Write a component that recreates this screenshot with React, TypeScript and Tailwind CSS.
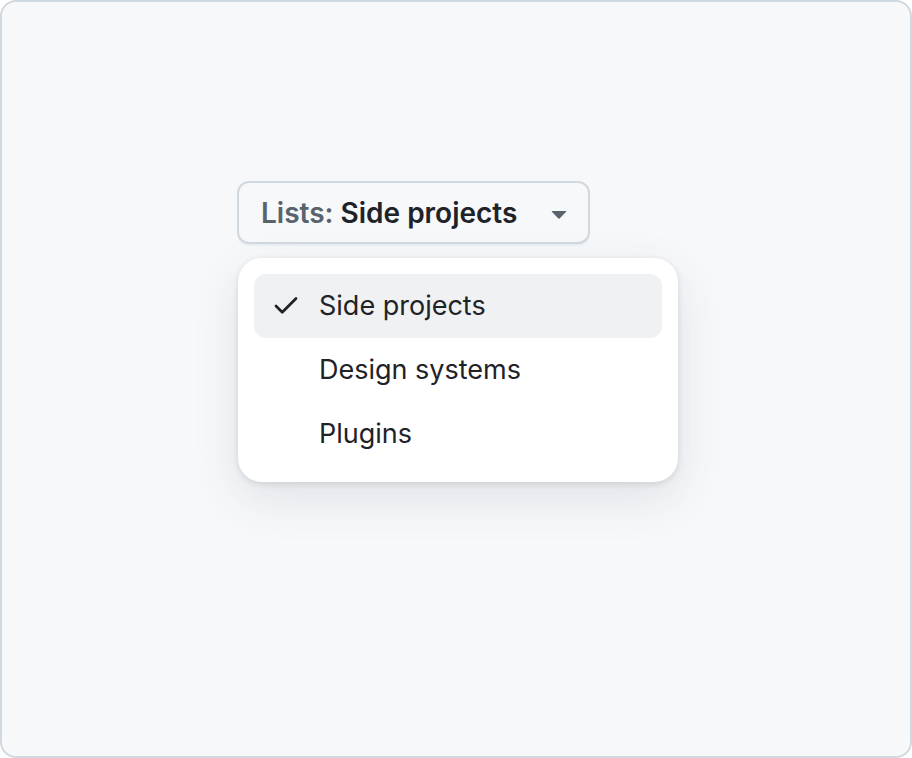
import { Check } from 'lucide-react';

const items = ['Side projects', 'Design systems', 'Plugins'];

export default function App() {
    const selected = 'Side projects';

    return (
        <div
            className="h-[758px] w-[912px] overflow-hidden rounded-[16px] border-2 border-[#d1d9e0] bg-[#f6f8fa] pl-[235px] pt-[179px]"
            style={{ fontFamily: 'Inter, "Noto Sans", sans-serif' }}
        >
            <button className="flex h-[63px] w-[353px] items-center rounded-[12px] border-2 border-[#d1d9e0] bg-[#f6f8fa] pl-[22px] pr-[13px] text-[28px] font-semibold shadow-[0_2px_0_rgba(31,35,40,0.04)]">
                <span className="text-[#59636e]">Lists:</span>
                <span className="ml-[7px] text-[#1f2328]">Side projects</span>
                <svg className="ml-auto h-[32px] w-[32px] text-[#59636e]" viewBox="0 0 16 16" fill="currentColor">
                    <path d="m4.427 7.427 3.396 3.396a.25.25 0 0 0 .354 0l3.396-3.396A.25.25 0 0 0 11.396 7H4.604a.25.25 0 0 0-.177.427Z" />
                </svg>
            </button>

            <div className="ml-[1px] mt-[14px] w-[440px] rounded-[24px] bg-white p-[16px] shadow-[0_2px_6px_rgba(31,35,40,0.12),0_16px_48px_rgba(66,74,83,0.12)]">
                {items.map((item) => (
                    <div
                        key={item}
                        className={
                            'flex h-[64px] items-center rounded-[12px] pl-[17px] text-[27px] text-[#1f2328] ' +
                            (item === selected ? 'bg-[#eff1f3]' : '')
                        }
                    >
                        <div className="flex w-[48px] items-center">
                            {item === selected && <Check size={30} strokeWidth={2.2} />}
                        </div>
                        <span>{item}</span>
                    </div>
                ))}
            </div>
        </div>
    );
}
